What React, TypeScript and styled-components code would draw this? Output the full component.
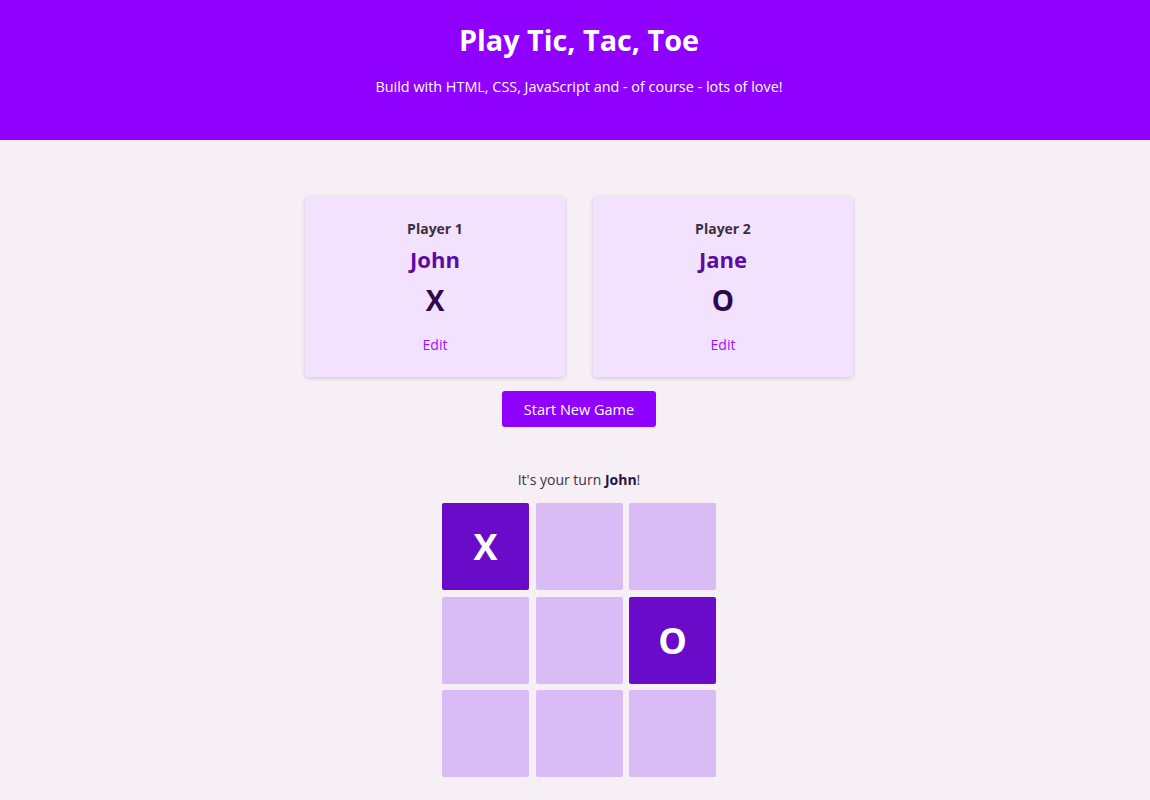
import React from "react";
import styled, { createGlobalStyle } from "styled-components";

const GlobalStyle = createGlobalStyle`
  * { box-sizing: border-box; }
  html, body { margin: 0; padding: 0; }
  body {
    font-family: "Open Sans", "Noto Sans", sans-serif;
    background-color: #f6eff6;
    color: #3b2d44;
  }
`;

const Header = styled.header`
  background-color: #8f00ff;
  height: 140px;
  padding: 20px 0 0 8px;
  text-align: center;
  color: #ffffff;
`;

const Title = styled.h1`
  margin: 0;
  font-size: 28.8px;
  font-weight: 700;
  line-height: 40px;
`;

const Subtitle = styled.p`
  margin: 17px 0 0;
  font-size: 14.4px;
  line-height: 20px;
`;

const Main = styled.main`
  padding: 57px 0 0 8px;
  display: flex;
  flex-direction: column;
  align-items: center;
`;

const Players = styled.ul`
  list-style: none;
  margin: 0;
  padding: 0;
  display: flex;
  gap: 28px;
`;

const PlayerCard = styled.li`
  width: 260px;
  height: 180px;
  background-color: #f3e2fd;
  border-radius: 3px;
  box-shadow: 0 1px 4px rgba(60, 20, 80, 0.2);
  display: flex;
  flex-direction: column;
  align-items: center;
  padding-top: 22px;
`;

const PlayerLabel = styled.h2`
  margin: 0;
  font-size: 14px;
  font-weight: 700;
  line-height: 20px;
  color: #3a2e3f;
`;

const PlayerName = styled.span`
  margin-top: 6px;
  font-size: 22px;
  font-weight: 700;
  line-height: 28px;
  color: #5c0ca2;
`;

const Symbol = styled.span`
  margin-top: 10px;
  font-size: 28px;
  font-weight: 700;
  line-height: 34px;
  color: #2c0a4d;
`;

const EditButton = styled.button`
  margin-top: 18px;
  background: none;
  border: none;
  padding: 0;
  font-family: inherit;
  font-size: 14px;
  line-height: 20px;
  color: #9a10ff;
  cursor: pointer;
`;

const StartButton = styled.button`
  margin-top: 14px;
  width: 154px;
  height: 36px;
  background-color: #8f00ff;
  border: none;
  border-radius: 3px;
  color: #ffffff;
  font-family: inherit;
  font-size: 14.5px;
  cursor: pointer;
`;

const TurnInfo = styled.p`
  margin: 43px 0 0;
  font-size: 14px;
  line-height: 20px;
  color: #3d3248;

  strong {
    color: #2a1040;
    font-weight: 700;
  }
`;

const Board = styled.ol`
  list-style: none;
  margin: 13px 0 0;
  padding: 0;
  display: grid;
  grid-template-columns: repeat(3, 87px);
  grid-auto-rows: 87px;
  gap: 6.5px;
`;

const Cell = styled.li<{ $filled: boolean }>`
  border-radius: 2px;
  background-color: ${(p) => (p.$filled ? "#6a0bc9" : "#d9bbf6")};
  color: #ffffff;
  display: flex;
  align-items: center;
  justify-content: center;
  font-size: 36px;
  font-weight: 700;
`;

const players = [
  { label: "Player 1", name: "John", symbol: "X" },
  { label: "Player 2", name: "Jane", symbol: "O" },
];

const board = ["X", "", "", "", "", "O", "", "", ""];

export default function App() {
  return (
    <>
      <GlobalStyle />
      <Header>
        <Title>Play Tic, Tac, Toe</Title>
        <Subtitle>Build with HTML, CSS, JavaScript and - of course - lots of love!</Subtitle>
      </Header>
      <Main>
        <Players>
          {players.map((p) => (
            <PlayerCard key={p.label}>
              <PlayerLabel>{p.label}</PlayerLabel>
              <PlayerName>{p.name}</PlayerName>
              <Symbol>{p.symbol}</Symbol>
              <EditButton>Edit</EditButton>
            </PlayerCard>
          ))}
        </Players>
        <StartButton>Start New Game</StartButton>
        <TurnInfo>
          It's your turn <strong>John</strong>!
        </TurnInfo>
        <Board>
          {board.map((v, i) => (
            <Cell key={i} $filled={v !== ""}>
              {v}
            </Cell>
          ))}
        </Board>
      </Main>
    </>
  );
}
